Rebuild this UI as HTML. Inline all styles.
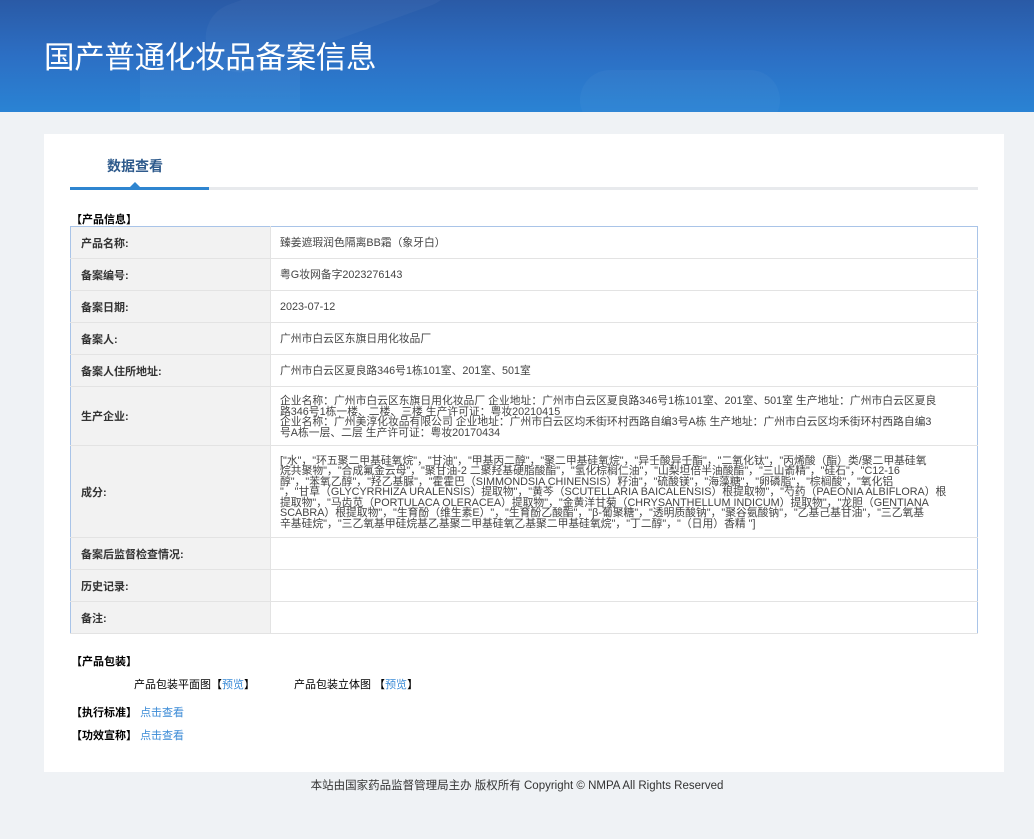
<!DOCTYPE html>
<html><head><meta charset="utf-8"><style>
*{margin:0;padding:0;box-sizing:border-box}
body{width:1034px;height:839px;background:#eff2f5;font-family:"Liberation Sans","Noto Sans CJK SC",sans-serif;font-size:11px;color:#333;position:relative;overflow:hidden}
.hdr{position:absolute;left:0;top:0;width:1034px;height:112px;background:linear-gradient(180deg,#2a5aa6 0%,#2c6fc4 50%,#2a83d4 100%);overflow:hidden}
.hdr h1{position:absolute;left:44px;top:33px;font-size:30.5px;font-weight:normal;color:#fff;letter-spacing:-0.3px}
.card{position:absolute;left:44px;top:134px;width:960px;height:638px;background:#fff}
.tab{position:absolute;left:63px;top:22px;font-size:14px;color:#2e5a8c;font-weight:bold}
.tline{position:absolute;left:26px;top:53px;width:908px;height:3px;background:#e8eaed}
.tblue{position:absolute;left:26px;top:53px;width:139px;height:3px;background:#2f85d0}
.tri{position:absolute;left:86px;top:48px;width:0;height:0;border-left:5px solid transparent;border-right:5px solid transparent;border-bottom:5px solid #2f85d0}
.sec{position:absolute;font-weight:bold;color:#000;font-size:11px}
table{position:absolute;left:26px;top:92px;width:908px;border-collapse:collapse;border:1px solid #a9c4e8;table-layout:fixed}
td{border-bottom:1px solid #e3e3e3;padding:0 9px;vertical-align:middle;line-height:10.5px;overflow:hidden}
td.l{width:200px;background:#f2f2f2;font-weight:bold;color:#333;padding-left:10px;border-right:1px solid #e3e3e3;padding-top:3px}
td.v{color:#444;font-size:10.8px;white-space:nowrap;padding-top:2px}
a{color:#3a8ad6;text-decoration:none}
.foot{position:absolute;top:777px;left:0;width:1034px;text-align:center;font-size:11.5px;color:#333}
</style></head><body>
<div class="hdr">
<div style="position:absolute;left:200px;top:-30px;width:260px;height:70px;border-radius:40px;background:rgba(255,255,255,0.035);transform:rotate(-20deg)"></div>
<div style="position:absolute;left:140px;top:70px;width:160px;height:60px;background:rgba(255,255,255,0.04)"></div>
<div style="position:absolute;left:580px;top:70px;width:200px;height:60px;border-radius:40px;background:rgba(255,255,255,0.03)"></div>
<h1>国产普通化妆品备案信息</h1></div>
<div class="card">
<div class="tab">数据查看</div>
<div class="tline"></div><div class="tblue"></div><div class="tri"></div>
<div class="sec" style="left:27px;top:77px">【产品信息】</div>
<table>
<tr style="height:32px"><td class="l">产品名称:</td><td class="v">臻姜遮瑕润色隔离BB霜（象牙白）</td></tr>
<tr style="height:32px"><td class="l">备案编号:</td><td class="v">粤G妆网备字2023276143</td></tr>
<tr style="height:32px"><td class="l">备案日期:</td><td class="v">2023-07-12</td></tr>
<tr style="height:32px"><td class="l">备案人:</td><td class="v">广州市白云区东旗日用化妆品厂</td></tr>
<tr style="height:32px"><td class="l">备案人住所地址:</td><td class="v">广州市白云区夏良路346号1栋101室、201室、501室</td></tr>
<tr style="height:59px"><td class="l">生产企业:</td><td class="v">企业名称：广州市白云区东旗日用化妆品厂 企业地址：广州市白云区夏良路346号1栋101室、201室、501室 生产地址：广州市白云区夏良<br>路346号1栋一楼、二楼、三楼 生产许可证：粤妆20210415<br>企业名称：广州美淳化妆品有限公司 企业地址：广州市白云区均禾街环村西路自编3号A栋 生产地址：广州市白云区均禾街环村西路自编3<br>号A栋一层、二层 生产许可证：粤妆20170434</td></tr>
<tr style="height:92px"><td class="l">成分:</td><td class="v">["水"，"环五聚二甲基硅氧烷"，"甘油"，"甲基丙二醇"，"聚二甲基硅氧烷"，"异壬酸异壬酯"，"二氧化钛"，"丙烯酸（酯）类/聚二甲基硅氧<br>烷共聚物"，"合成氟金云母"，"聚甘油-2 二聚羟基硬脂酸酯"，"氢化棕榈仁油"，"山梨坦倍半油酸酯"，"三山嵛精"，"硅石"，"C12-16<br>醇"，"苯氧乙醇"，"羟乙基脲"，"霍霍巴（SIMMONDSIA CHINENSIS）籽油"，"硫酸镁"，"海藻糖"，"卵磷脂"，"棕榈酸"，"氧化铝<br>"，"甘草（GLYCYRRHIZA URALENSIS）提取物"，"黄芩（SCUTELLARIA BAICALENSIS）根提取物"，"芍药（PAEONIA ALBIFLORA）根<br>提取物"，"马齿苋（PORTULACA OLERACEA）提取物"，"金黄洋甘菊（CHRYSANTHELLUM INDICUM）提取物"，"龙胆（GENTIANA<br>SCABRA）根提取物"，"生育酚（维生素E）"，"生育酚乙酸酯"，"β-葡聚糖"，"透明质酸钠"，"聚谷氨酸钠"，"乙基己基甘油"，"三乙氧基<br>辛基硅烷"，"三乙氧基甲硅烷基乙基聚二甲基硅氧乙基聚二甲基硅氧烷"，"丁二醇"，"（日用）香精 "]</td></tr>
<tr style="height:32px"><td class="l">备案后监督检查情况:</td><td class="v"></td></tr>
<tr style="height:32px"><td class="l">历史记录:</td><td class="v"></td></tr>
<tr style="height:32px"><td class="l">备注:</td><td class="v"></td></tr>
</table>
<div class="sec" style="left:27px;top:519px">【产品包装】</div>
<div style="position:absolute;left:90px;top:542px;color:#000">产品包装平面图【<a>预览</a>】</div>
<div style="position:absolute;left:250px;top:542px;color:#000">产品包装立体图 【<a>预览</a>】</div>
<div class="sec" style="left:27px;top:570px">【执行标准】 <a style="font-weight:normal">点击查看</a></div>
<div class="sec" style="left:27px;top:593px">【功效宣称】 <a style="font-weight:normal">点击查看</a></div>
</div>
<div class="foot">本站由国家药品监督管理局主办 版权所有 Copyright © NMPA All Rights Reserved</div>
</body></html>
